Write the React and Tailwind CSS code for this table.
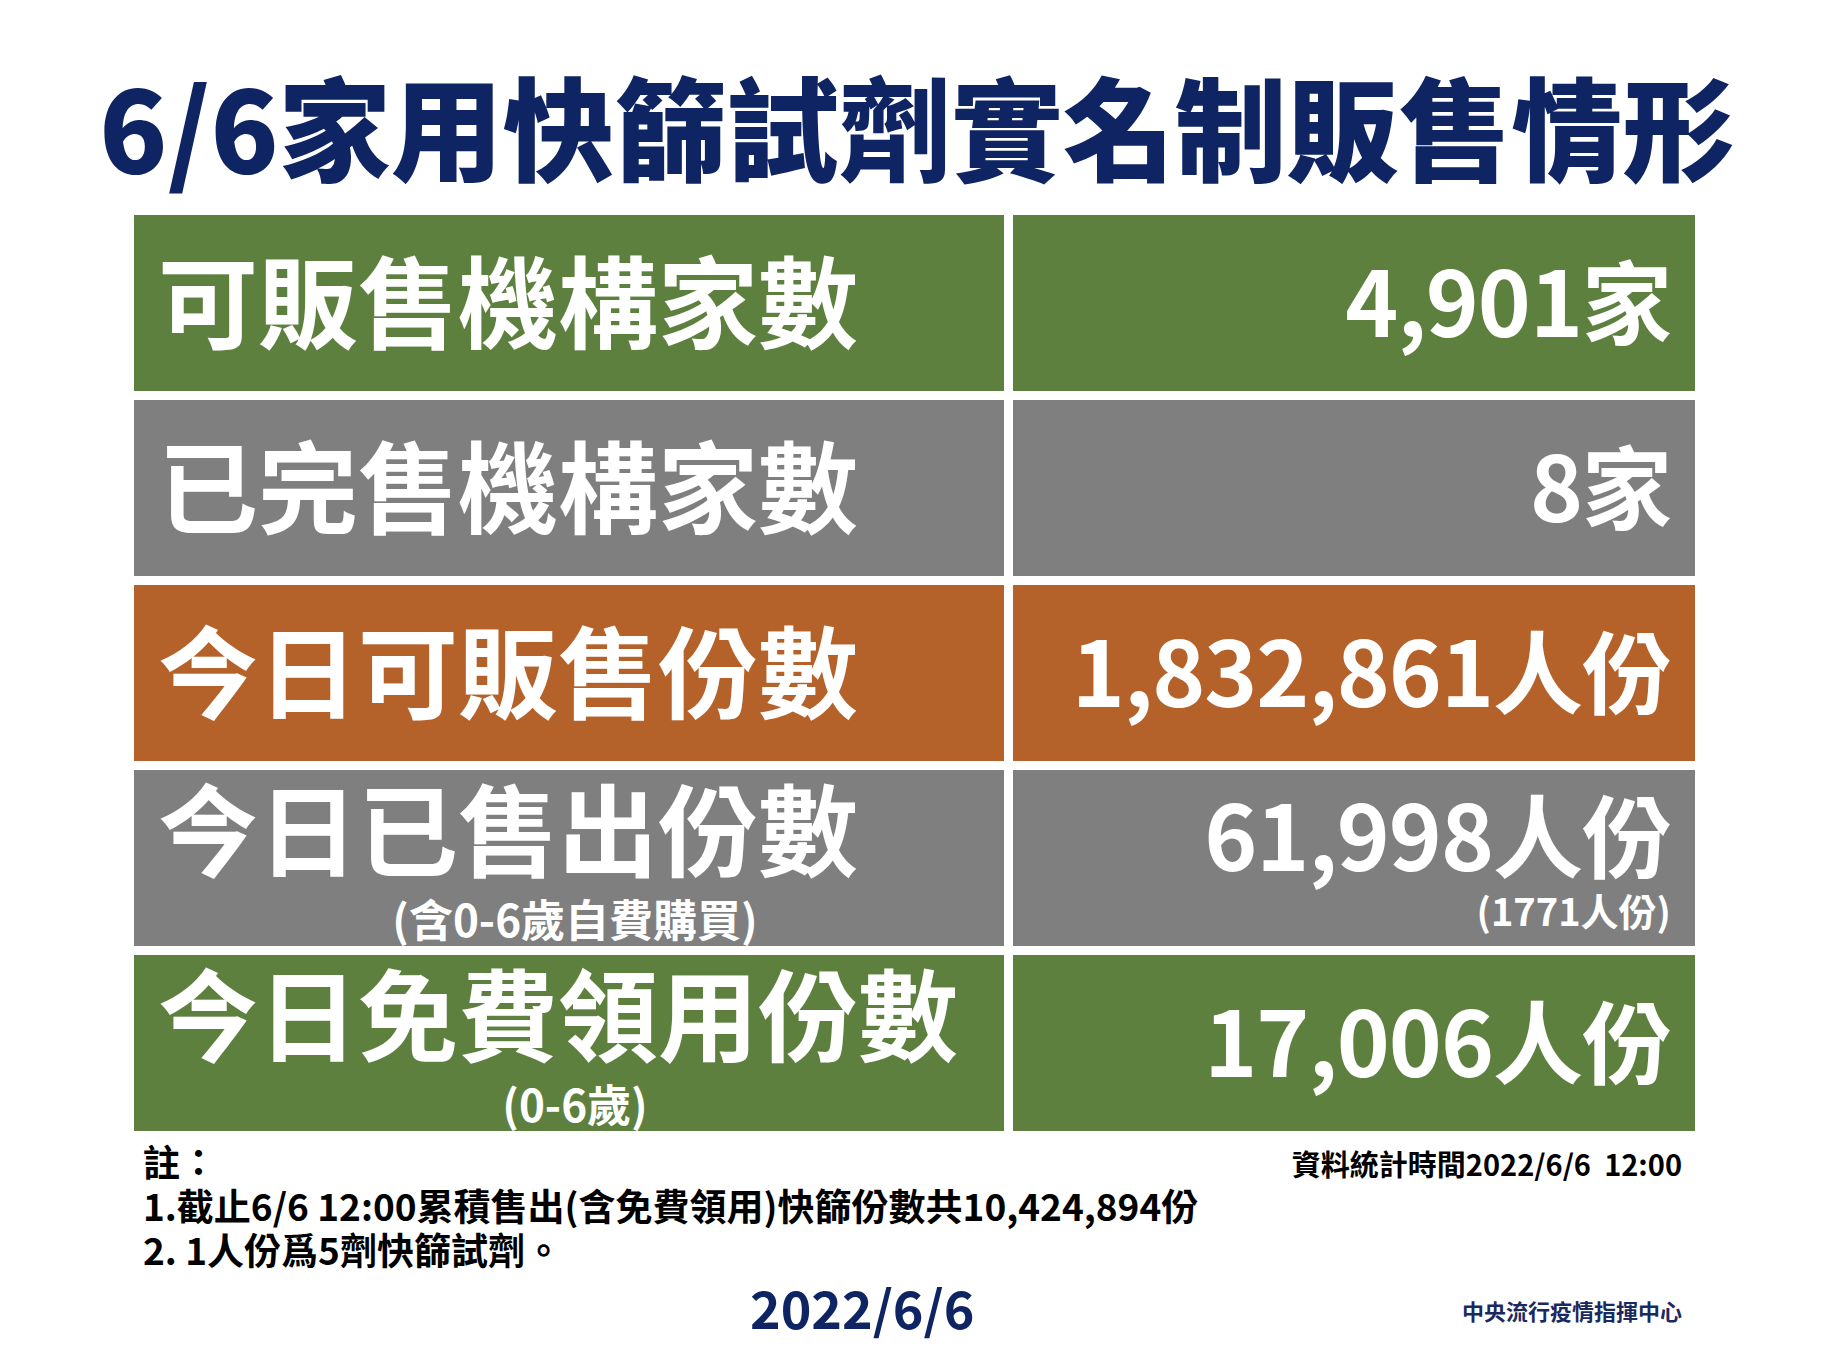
const rows = [
  { label: "可販售機構家數", value: "4,901家", bg: "bg-[#5e803f]" },
  { label: "已完售機構家數", value: "8家", bg: "bg-[#7f7f7f]" },
  { label: "今日可販售份數", value: "1,832,861人份", bg: "bg-[#b5612a]" },
  {
    label: "今日已售出份數",
    sub: "(含0-6歲自費購買)",
    value: "61,998人份",
    valueSub: "(1771人份)",
    bg: "bg-[#7f7f7f]",
  },
  {
    label: "今日免費領用份數",
    sub: "(0-6歲)",
    value: "17,006人份",
    bg: "bg-[#5e803f]",
  },
];

const LabelCell = ({ row }) => {
  if (!row.sub) {
    return (
      <div className={`${row.bg} h-[176px] flex items-center pl-[24px] pb-[10px]`}>
        <span className="text-[100px] leading-none font-bold text-white">
          {row.label}
        </span>
      </div>
    );
  }
  return (
    <div className={`${row.bg} h-[176px] flex flex-col pl-[24px] pt-[6px]`}>
      <span className="text-[100px] leading-none font-bold text-white">
        {row.label}
      </span>
      <span className="mt-[20px] text-[44px] leading-none font-bold text-white text-center w-[834px]">
        {row.sub}
      </span>
    </div>
  );
};

const ValueCell = ({ row }) => {
  if (!row.valueSub) {
    return (
      <div className={`${row.bg} h-[176px] flex items-center justify-end pr-[24px] pb-[10px]`}>
        <span className="text-[90px] leading-none font-bold text-white tracking-[-1px]">
          {row.value}
        </span>
      </div>
    );
  }
  return (
    <div className={`${row.bg} h-[176px] flex flex-col items-end pr-[24px] pt-[17px]`}>
      <span className="text-[90px] leading-none font-bold text-white tracking-[-1px]">
        {row.value}
      </span>
      <span className="mt-[14px] text-[38px] leading-none font-bold text-white">
        {row.valueSub}
      </span>
    </div>
  );
};

export default function App() {
  return (
    <div
      className="w-[1834px] h-[1364px] bg-white overflow-hidden"
      style={{ fontFamily: '"Noto Sans CJK TC", "Noto Sans", sans-serif' }}
    >
      <h1 className="pt-[68px] text-center text-[112px] leading-none font-black text-[#0f2462]">
        6/6家用快篩試劑實名制販售情形
      </h1>

      <div className="ml-[134px] mt-[35px] w-[1561px] grid grid-cols-[870px_682px] gap-x-[9px] gap-y-[9px]">
        {rows.map((row, i) => (
          <>
            <LabelCell key={"l" + i} row={row} />
            <ValueCell key={"v" + i} row={row} />
          </>
        ))}
      </div>

      <div className="ml-[143px] w-[1539px] mt-[8px] flex justify-between text-black font-bold">
        <div className="text-[37px] leading-[44px]">
          <div>註：</div>
          <div>1.截止6/6 12:00累積售出(含免費領用)快篩份數共10,424,894份</div>
          <div>2. 1人份爲5劑快篩試劑。</div>
        </div>
        <div className="text-[29px] leading-[40px] pt-[4px] whitespace-pre">
          資料統計時間2022/6/6  12:00
        </div>
      </div>

      <div className="ml-[750px] w-[932px] mt-[10px] flex items-center justify-between">
        <div className="text-[52px] leading-none font-bold text-[#0f2462]">2022/6/6</div>
        <div className="text-[22px] leading-none font-bold text-[#1b2a5e] pt-[6px]">中央流行疫情指揮中心</div>
      </div>
    </div>
  );
}
